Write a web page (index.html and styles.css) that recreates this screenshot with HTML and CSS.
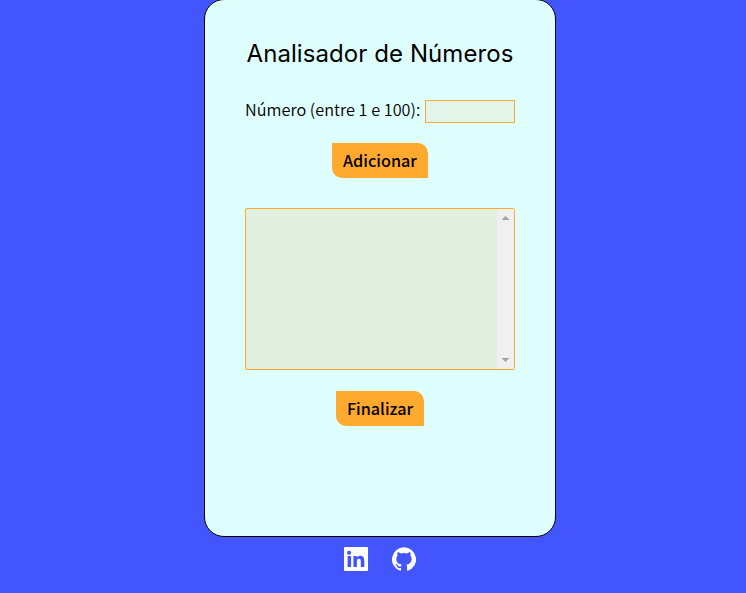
FILE: index.html
```html
<!DOCTYPE html>
<html lang="pt-br">
<head>
<meta charset="UTF-8">
<title>Analisador de Números</title>
<link rel="stylesheet" href="styles.css">
</head>
<body>
<main class="card">
  <h1 class="title">Analisador de Números</h1>
  <div class="field">
    <label for="num" class="label">Número (entre 1 e 100):</label>
    <input type="text" id="num" class="number">
  </div>
  <button class="btn btn-add">Adicionar</button>
  <div class="list">
    <div class="scrollbar">
      <svg width="17" height="17" viewBox="0 0 17 17"><path d="M4.500 11h8l-4-4z"/></svg>
      <svg width="17" height="17" viewBox="0 0 17 17"><path d="M4.500 6h8l-4 4z"/></svg>
    </div>
  </div>
  <button class="btn btn-end">Finalizar</button>
</main>
<footer class="social">
  <svg class="icon" viewBox="0 0 24 24"><path d="M23 0H1Q0 0 0 1v22q0 1 1 1h22q1 0 1-1V1q0-1-1-1zM7.100 20H3.600V9h3.500v11zM5.300 7.800a2.060 2.060 0 1 1 0-4.100 2.060 2.060 0 0 1 0 4.100zM20.300 20h-3.500v-5.300c0-1.300 0-2.900-1.800-2.900s-2.100 1.400-2.100 2.800V20H9.400V9h3.400v1.500c.5-.9 1.600-1.800 3.300-1.800 3.500 0 4.200 2.300 4.200 5.300v6z"/></svg>
  <svg class="icon" viewBox="0 0 24 24"><path d="M12 .3a12 12 0 0 0-3.800 23.400c.6.1.8-.3.8-.6v-2c-3.300.7-4-1.600-4-1.600-.6-1.400-1.400-1.800-1.400-1.800-1-.7.1-.7.1-.7 1.200 0 1.900 1.200 1.900 1.200 1 1.800 2.800 1.300 3.500 1 0-.8.4-1.300.7-1.600-2.700-.3-5.500-1.300-5.500-6 0-1.200.5-2.300 1.300-3.100-.2-.4-.6-1.600 0-3.200 0 0 1-.3 3.400 1.200a11.500 11.500 0 0 1 6 0c2.300-1.500 3.300-1.200 3.300-1.200.6 1.600.2 2.800 0 3.200.9.800 1.300 1.900 1.300 3.200 0 4.600-2.800 5.600-5.500 5.900.5.400.9 1 .9 2.200v3.300c0 .3.100.7.800.6A12 12 0 0 0 12 .3"/></svg>
</footer>
</body>
</html>
```

FILE: styles.css
```css
* { box-sizing: border-box; }
body {
  margin: 0;
  height: 593px;
  overflow: hidden;
  background: #4255ff;
  font-family: "Noto Sans CJK JP", sans-serif;
  color: #000;
}
.card {
  width: 352px;
  height: 538px;
  margin: -1px auto 0 204px;
  padding: 39px 40px 0;
  border: 1px solid #000;
  border-radius: 20px;
  background: #dfffff;
  display: flex;
  flex-direction: column;
  align-items: center;
}
.title {
  margin: 0;
  font: 400 24px/29px Inter, sans-serif;
  letter-spacing: 0.08px;
  white-space: nowrap;
}
.field {
  width: 270px;
  height: 23px;
  margin-top: 32px;
  display: flex;
  justify-content: space-between;
  align-items: center;
}
.label {
  padding-bottom: 5px;
  font-size: 16.3px;
  line-height: 23px;
  font-weight: 350;
  white-space: nowrap;
}
.number {
  width: 90px;
  height: 23px;
  padding: 0;
  border: 1px solid #ffa92f;
  background: #e3f5e9;
}
.btn {
  height: 35px;
  padding: 0;
  border: 0;
  border-radius: 0 10px 0 10px;
  background: #ffa92f;
  color: #000;
  font: 500 16.2px/35px "Noto Sans CJK JP", sans-serif;
}
.btn-add { width: 96px; margin-top: 20px; }
.btn-end { width: 88px; margin-top: 21px; }
.list {
  width: 270px;
  height: 162px;
  margin-top: 30px;
  border: 1px solid #ffa92f;
  border-radius: 2px;
  background: #e1f0de;
  display: flex;
  justify-content: flex-end;
}
.scrollbar {
  width: 17px;
  background: #f0f0f0;
  display: flex;
  flex-direction: column;
  justify-content: space-between;
  fill: #a3a3a3;
}
.social {
  display: flex;
  gap: 24px;
  margin: 10px 0 0 344px;
}
.icon { width: 24px; height: 24px; fill: #fff; }
```
